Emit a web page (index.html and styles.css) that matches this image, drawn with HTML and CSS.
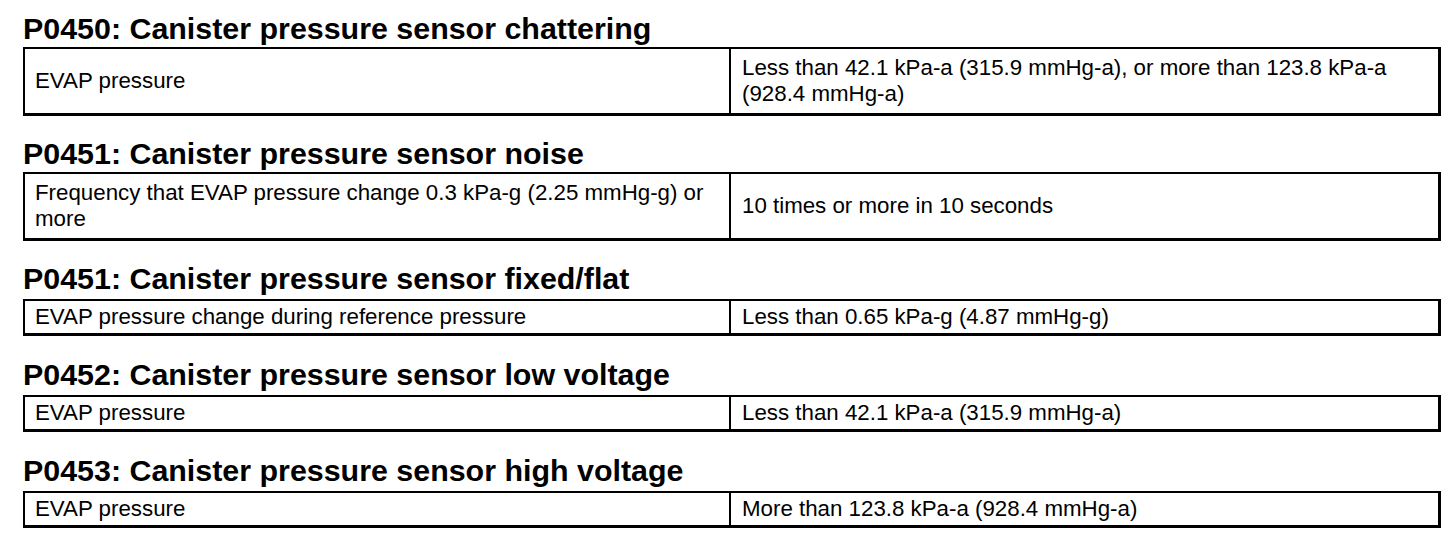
FILE: index.html
```html
<!DOCTYPE html>
<html>
<head>
<meta charset="utf-8">
<link rel="stylesheet" href="styles.css">
</head>
<body>
<div class="page">
  <section class="dtc">
    <h2 class="dtc-title">P0450: Canister pressure sensor chattering</h2>
    <div class="spec two">
      <div class="cell cond">EVAP pressure</div>
      <div class="cell val">Less than 42.1 kPa-a (315.9 mmHg-a), or more than 123.8 kPa-a (928.4 mmHg-a)</div>
    </div>
  </section>
  <section class="dtc">
    <h2 class="dtc-title">P0451: Canister pressure sensor noise</h2>
    <div class="spec two">
      <div class="cell cond">Frequency that EVAP pressure change 0.3 kPa-g (2.25 mmHg-g) or more</div>
      <div class="cell val">10 times or more in 10 seconds</div>
    </div>
  </section>
  <section class="dtc">
    <h2 class="dtc-title">P0451: Canister pressure sensor fixed/flat</h2>
    <div class="spec one">
      <div class="cell cond">EVAP pressure change during reference pressure</div>
      <div class="cell val">Less than 0.65 kPa-g (4.87 mmHg-g)</div>
    </div>
  </section>
  <section class="dtc">
    <h2 class="dtc-title">P0452: Canister pressure sensor low voltage</h2>
    <div class="spec one">
      <div class="cell cond">EVAP pressure</div>
      <div class="cell val">Less than 42.1 kPa-a (315.9 mmHg-a)</div>
    </div>
  </section>
  <section class="dtc">
    <h2 class="dtc-title">P0453: Canister pressure sensor high voltage</h2>
    <div class="spec one">
      <div class="cell cond">EVAP pressure</div>
      <div class="cell val">More than 123.8 kPa-a (928.4 mmHg-a)</div>
    </div>
  </section>
</div>
</body>
</html>
```
FILE: styles.css
```css
html, body {
  margin: 0;
  padding: 0;
  background: #fff;
}
body {
  font-family: "Liberation Sans", Arial, sans-serif;
  color: #000;
}
.page {
  width: 1418px;
  padding: 11px 0 0 23px;
  display: flex;
  flex-direction: column;
}
.dtc {
  margin-bottom: 20px;
}
.dtc:nth-child(n+3) {
  margin-bottom: 21px;
}
.dtc-title {
  margin: 0 0 2px 0;
  font-size: 30.4px;
  line-height: 34px;
  font-weight: bold;
}
.spec {
  display: grid;
  grid-template-columns: 706px 1fr;
  border-top: 2px solid #000;
  border-left: 2px solid #000;
  border-right: 3px solid #000;
  border-bottom: 3px solid #000;
  font-size: 22.3px;
  line-height: 26px;
}
.spec.one {
  margin-top: 4px;
}
.cell {
  padding: 2px 10px;
  display: flex;
  align-items: center;
}
.one .cell {
  padding-top: 3px;
  padding-bottom: 3px;
}
.two .cell {
  min-height: 60px;
}
.cond {
  border-right: 2px solid #000;
}
.val {
  padding-left: 11px;
}
```
